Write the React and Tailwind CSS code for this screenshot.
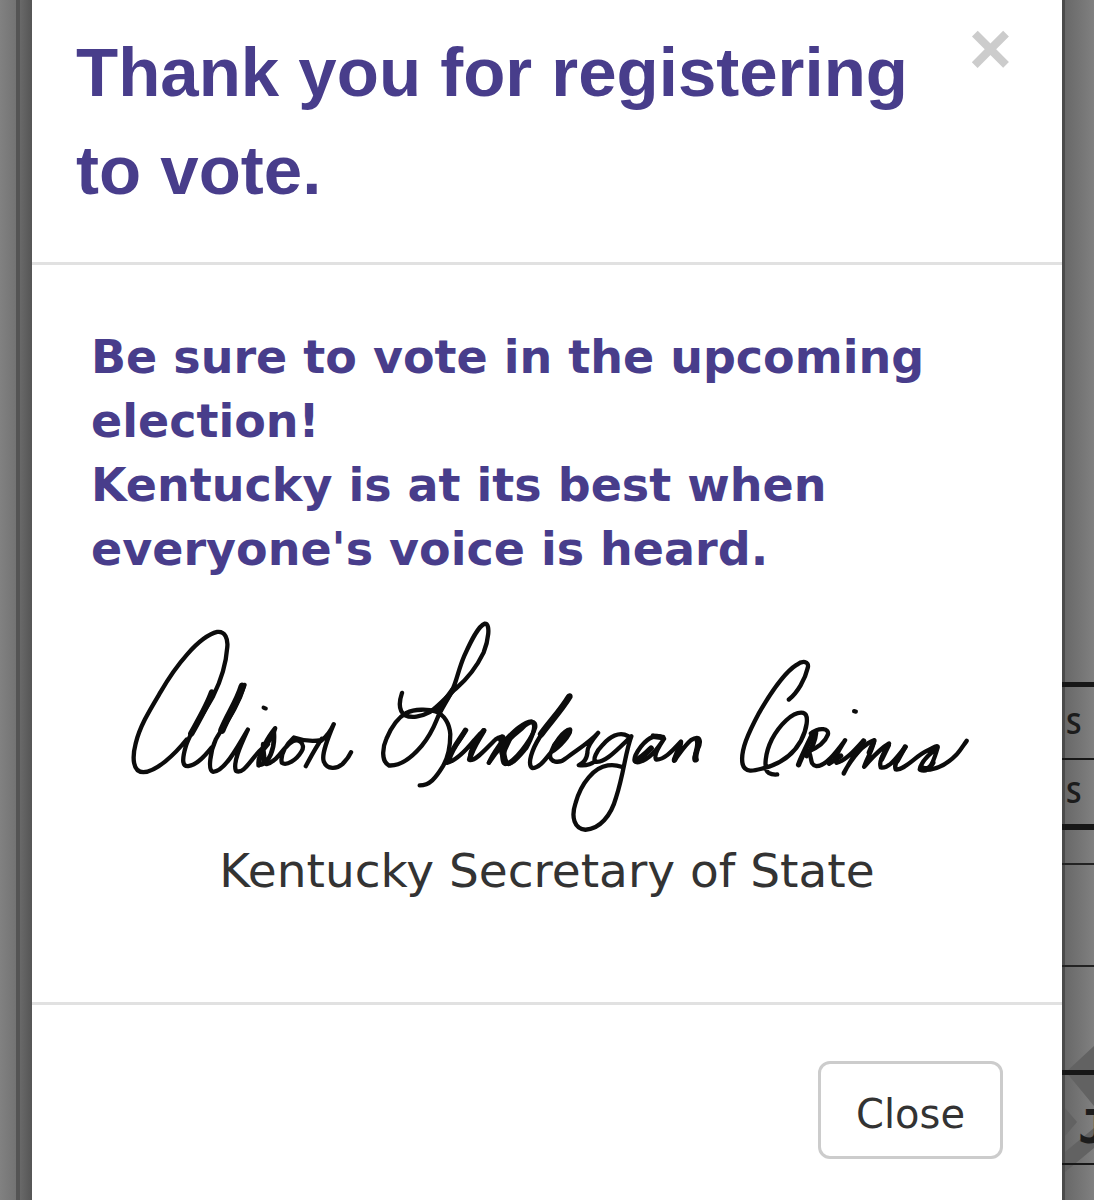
import { useState } from "react";

function Signature() {
  return (
    <svg
      viewBox="0 0 2580 690"
      role="img"
      aria-label="Alison Lundergan Grimes"
      className="block w-full"
      fill="none"
      stroke="#0c0c0c"
      strokeWidth="13"
      strokeLinecap="round"
      strokeLinejoin="round"
    >
      {/* Alison */}
      <g>
        <path d="M200 386C165 430 108 484 70 484C38 484 36 440 47 398C60 345 88 300 122 243C165 168 235 77 292 63C316 60 325 85 322 110C318 165 300 215 280 255C250 310 212 360 198 405C186 445 186 468 205 466C232 462 255 435 275 410" />
        <path strokeWidth="19" d="M276 245C262 285 235 330 214 368" />
        <path strokeWidth="22" d="M367 226C352 275 325 310 306 358" />
        <path d="M374 222C350 300 310 345 288 385C272 420 262 480 280 483C312 482 350 415 384 356C364 400 338 455 348 480C372 494 395 440 428 412C450 392 462 370 466 352C444 380 424 410 416 464" />
        <path strokeWidth="14" d="M462 365C466 410 448 462 418 462C412 450 424 420 444 400M430 400C428 425 438 440 430 458" />
        <path d="M440 460C470 452 480 425 505 402C535 372 560 400 545 422C530 448 500 466 486 456C480 430 500 400 522 380C550 390 580 392 604 388M606 384C588 410 572 440 558 466M604 390C620 378 632 362 642 340C625 380 604 430 612 452C622 478 652 474 668 460C680 448 688 438 694 424" />
        <path strokeWidth="12" d="M431 290L438 293" />
      </g>
      {/* Lundergan, capital through the first d */}
      <g transform="translate(690 0)">
        <path d="M157 246C146 278 150 302 166 313C184 322 215 318 240 304C268 285 292 255 320 232C355 202 385 160 402 125C416 90 424 38 406 38C385 45 362 95 344 135C328 172 322 205 312 228C300 260 275 292 262 325C248 360 234 383 216 405C182 445 148 466 118 464C94 452 98 410 110 384C125 348 145 320 170 306C195 294 235 294 258 302C285 312 300 340 302 370C302 410 295 440 280 466C258 502 240 524 210 524" />
        <path strokeWidth="17" d="M310 236L264 300" />
        <path d="M346 360C330 395 300 420 292 456C320 450 352 415 374 388C388 372 392 366 404 358C380 392 356 420 362 448C382 448 410 412 438 386C452 374 464 378 458 390C445 410 428 430 418 456" />
        <path strokeWidth="16" d="M348 358C332 385 308 410 298 446M402 360C385 390 366 416 360 446M452 384C462 395 450 415 462 440C466 455 475 462 482 456" />
        <path d="M418 456C445 415 475 385 480 388C470 410 452 438 462 456C485 470 510 435 530 412C545 385 565 340 546 332C520 334 490 365 468 386C455 420 456 448 475 458" />
      </g>
      {/* second half of the middle name with the long g */}
      <g transform="translate(1140 210)">
        <path d="M30 245C65 220 100 165 107 140C110 118 92 118 68 142C45 160 22 182 8 200M212 44C180 90 145 130 120 170C98 205 82 250 98 262C120 262 138 235 155 214C180 200 215 160 212 146C192 148 162 190 152 220C148 245 180 250 200 232C235 205 270 185 296 156C276 180 262 200 264 215C262 235 250 248 238 253C262 256 276 250 288 240M386 166C360 150 330 168 310 192C290 212 280 236 288 243C315 247 345 215 396 166C378 212 374 275 350 350C335 405 300 446 258 447C225 444 214 410 228 368C245 305 285 260 325 254C345 251 355 254 366 258" />
        <path strokeWidth="20" d="M209 48C185 88 150 125 125 160M207 152C192 166 178 180 168 194M8 170C12 190 5 220 18 246" />
        <path d="M490 170C460 152 425 190 408 224C402 240 405 246 418 244C450 235 470 210 494 174C480 195 462 225 470 236C492 238 515 215 545 182C548 195 530 220 524 240C540 220 555 195 575 178C605 158 606 185 595 205C588 218 582 228 586 238" />
        <path strokeWidth="17" d="M410 238C428 230 442 215 455 202M462 166L490 170M594 178C602 195 584 220 590 236M540 200L526 236" />
      </g>
      {/* Grimes */}
      <g transform="translate(1830 90)">
        <path d="M179 176C205 155 228 115 236 80C240 60 220 58 202 72C165 95 125 155 90 215C58 275 32 330 40 370C48 400 80 388 104 382C150 370 190 345 215 300C232 268 242 222 222 216C190 210 150 255 128 295C108 335 102 385 118 396C128 402 134 402 144 401" />
        <path strokeWidth="16" d="M252 276C236 310 218 345 208 372" />
        <path d="M245 278C270 258 302 262 296 282C285 312 255 325 238 332C250 350 240 372 262 376C290 376 320 335 348 298C332 325 312 350 322 366C348 360 375 330 402 300C382 332 360 365 344 398M344 396C370 350 400 310 436 298C430 330 412 355 405 378C430 350 450 325 480 308C465 335 448 360 455 380C482 385 505 345 530 318C512 345 492 370 500 386C525 390 560 345 594 330C612 320 628 310 626 320C600 340 575 365 572 386C600 400 612 368 626 320M575 388C620 390 655 370 682 342C698 324 704 312 713 300" />
        <path strokeWidth="15" d="M260 276C258 300 246 325 232 345M300 368L335 345M404 300L380 340M434 302L420 335M478 314L458 355M528 318L505 360M580 380C592 388 606 380 612 366" />
        <path strokeWidth="13" d="M375 211L380 212" />
      </g>
    </svg>
  );
}

// Slices of the form that stay visible under the backdrop
function BackdropLeft() {
  return (
    <div aria-hidden="true" className="flex w-8 shrink-0 bg-[#808080]">
      <div className="flex-1 bg-linear-to-r from-[#818181] to-[#737373]" />
      <div className="w-1 bg-[#545454]" />
      <div className="w-3 bg-linear-to-r from-[#696969] to-[#555555]" />
    </div>
  );
}

function BackdropRight() {
  return (
    <div
      aria-hidden="true"
      className="relative isolate flex w-8 shrink-0 flex-col overflow-hidden bg-linear-to-r from-[#666666] to-[#808080] font-['Noto_Sans',sans-serif] text-[28px] leading-none text-[#1c1c1c] shadow-[inset_3px_0_#4b4b4b]"
    >
      <svg viewBox="0 0 32 140" className="absolute top-[1040px] left-0 -z-10 w-8" fill="#626262">
        <path d="M32 6V66L4 32Z" />
        <path d="M3 68L15 82L3 96Z" />
        <path d="M3 112L32 88V108L3 132Z" />
      </svg>
      <div className="h-[682px] shrink-0" />
      <div className="flex h-[78px] shrink-0 items-center border-t-[5px] border-b-2 border-[#171717] pl-1 font-semibold">S</div>
      <div className="flex h-[70px] shrink-0 items-center border-b-[6px] border-[#171717] pl-1 font-semibold">S</div>
      <div className="h-[35px] shrink-0 border-b-2 border-[#222222]" />
      <div className="h-[102px] shrink-0 border-b-2 border-[#222222]" />
      <div className="h-[108px] shrink-0 border-b-[5px] border-[#171717]" />
      <div className="flex h-[90px] shrink-0 items-center border-b-2 border-[#171717] pt-4 pl-4 font-['DejaVu_Sans_Mono',monospace] text-[46px] font-bold">J</div>
    </div>
  );
}

export default function App() {
  const [open, setOpen] = useState(true);
  const close = () => setOpen(false);

  return (
    <div className="flex h-screen overflow-hidden bg-[#808080]">
      <BackdropLeft />
      {open ? (
        <div
          role="dialog"
          aria-modal="true"
          aria-labelledby="dialog-title"
          className="min-w-0 flex-1 bg-white font-['DejaVu_Sans',Verdana,sans-serif] text-[#333333]"
        >
          <header className="flex items-start border-b-[3px] border-[#e1e1e1] pt-6 pr-[50px] pb-[42px] pl-11">
            <h1
              id="dialog-title"
              className="flex-1 font-['Liberation_Sans',Arial,sans-serif] text-[69px] leading-[98px] font-bold text-[#483d8b]"
            >
              Thank you for registering to vote.
            </h1>
            <button
              type="button"
              aria-label="Dismiss"
              onClick={close}
              className="font-['Liberation_Sans',Arial,sans-serif] text-[74px] leading-[50px] font-bold text-[#cccccc]"
            >
              ×
            </button>
          </header>

          <div className="px-[59px] pt-[60px] pb-[101px]">
            <p className="text-[46px] leading-[64px] font-bold text-[#483d8b]">
              Be sure to vote in the upcoming election!
              <br />
              Kentucky is at its best when everyone's voice is heard.
            </p>
            <div className="mt-[30px] mr-6 ml-[29px]">
              <Signature />
            </div>
            <p className="text-center text-[47px] leading-[60px]">Kentucky Secretary of State</p>
          </div>

          <footer className="flex justify-end border-t-[3px] border-[#e1e1e1] px-[59px] pt-14">
            <button
              type="button"
              onClick={close}
              className="rounded-xl border-[3px] border-[#cccccc] bg-white px-[35px] pt-5 pb-3 text-[40px] leading-[60px]"
            >
              Close
            </button>
          </footer>
        </div>
      ) : (
        <div className="flex-1" />
      )}
      <BackdropRight />
    </div>
  );
}
